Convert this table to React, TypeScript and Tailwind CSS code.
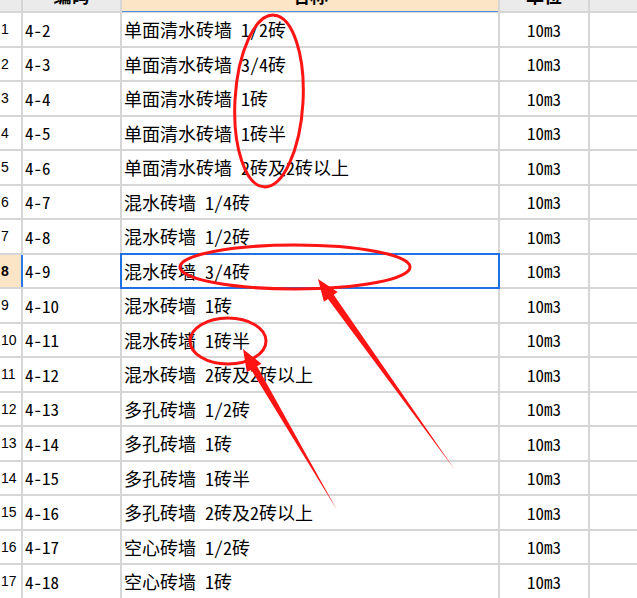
import React from "react";

const rows: [string, string][] = [
  ["4-2", "单面清水砖墙 1/2砖"],
  ["4-3", "单面清水砖墙 3/4砖"],
  ["4-4", "单面清水砖墙 1砖"],
  ["4-5", "单面清水砖墙 1砖半"],
  ["4-6", "单面清水砖墙 2砖及2砖以上"],
  ["4-7", "混水砖墙 1/4砖"],
  ["4-8", "混水砖墙 1/2砖"],
  ["4-9", "混水砖墙 3/4砖"],
  ["4-10", "混水砖墙 1砖"],
  ["4-11", "混水砖墙 1砖半"],
  ["4-12", "混水砖墙 2砖及2砖以上"],
  ["4-13", "多孔砖墙 1/2砖"],
  ["4-14", "多孔砖墙 1砖"],
  ["4-15", "多孔砖墙 1砖半"],
  ["4-16", "多孔砖墙 2砖及2砖以上"],
  ["4-17", "空心砖墙 1/2砖"],
  ["4-18", "空心砖墙 1砖"],
];

const CJK = '"Noto Sans Mono CJK SC", "Noto Sans CJK SC", sans-serif';

function arrowPoints(tx: number, ty: number, px: number, py: number, L: number, W: number, w: number) {
  const dx = px - tx;
  const dy = py - ty;
  const len = Math.hypot(dx, dy);
  const ux = dx / len;
  const uy = dy / len;
  const nx = -uy;
  const ny = ux;
  const bx = px - ux * L;
  const by = py - uy * L;
  const pts = [
    [tx, ty],
    [bx + nx * w, by + ny * w],
    [bx + nx * W, by + ny * W],
    [px, py],
    [bx - nx * W, by - ny * W],
    [bx - nx * w, by - ny * w],
  ];
  return pts.map((p) => `${p[0].toFixed(1)},${p[1].toFixed(1)}`).join(" ");
}

export default function App() {
  return (
    <div className="relative w-[637px] h-[598px] overflow-hidden bg-[#d6d6d6] flex flex-col gap-[2px]" style={{ fontFamily: CJK }}>
      {/* header */}
      <div className="flex gap-[2px] h-[11px] shrink-0">
        <div className="w-[21px] bg-[#ebebeb]" />
        <div className="w-[97px] bg-[#ebebeb] overflow-hidden flex justify-center">
          <span className="text-[18px] leading-[18px] -mt-[14px] font-bold text-black">编码</span>
        </div>
        <div className="w-[376px] bg-[#fce4c6] overflow-hidden flex justify-center shadow-[0_1px_0_#4a90e2] relative z-10">
          <span className="text-[18px] leading-[18px] -mt-[14px] font-bold text-black">名称</span>
        </div>
        <div className="w-[88px] bg-[#ebebeb] overflow-hidden flex justify-center">
          <span className="text-[18px] leading-[18px] -mt-[14px] font-bold text-black">单位</span>
        </div>
        <div className="flex-1 bg-[#ebebeb]" />
      </div>
      {rows.map(([code, name], i) => {
        const sel = i === 7;
        return (
          <div key={i} className={`flex gap-[2px] shrink-0 ${i % 2 === 0 ? "h-[33px]" : "h-[32px]"}`}>
            <div
              className={`w-[21px] flex items-center pl-[1px] text-[14px] text-black ${sel ? "bg-[#fce4c6] font-bold shadow-[2px_0_0_#2a78e4] relative z-10" : "bg-white"}`}
              style={{ fontFamily: '"Liberation Sans", Arial, sans-serif' }}
            >
              {i + 1}
            </div>
            <div className="w-[97px] bg-white flex items-center pl-[2px] text-[17px] text-black">{code}</div>
            <div
              className={`w-[376px] bg-white flex items-center pl-[2px] text-[18px] text-black ${sel ? "outline-2 outline-[#1f6fe5] relative z-10" : ""}`}
            >
              {name}
            </div>
            <div className="w-[88px] bg-white flex items-center justify-center text-[17px] text-black">10m3</div>
            <div className="flex-1 bg-white" />
          </div>
        );
      })}
      <svg className="absolute inset-0 pointer-events-none z-20" width={637} height={598} viewBox="0 0 637 598">
        <g fill="none" stroke="#ff1414" strokeWidth={3}>
          <ellipse cx={269} cy={101} rx={34} ry={86} transform="rotate(3.3 269 101)" />
          <ellipse cx={295} cy={267} rx={115} ry={22} />
          <ellipse cx={228} cy={341} rx={38} ry={23} />
        </g>
        <g fill="#ff1414">
          <polygon points={arrowPoints(455, 470, 318, 279, 22, 8.5, 3.5)} />
          <polygon points={arrowPoints(337, 510, 243, 349, 22, 8.5, 3.5)} />
        </g>
      </svg>
    </div>
  );
}
